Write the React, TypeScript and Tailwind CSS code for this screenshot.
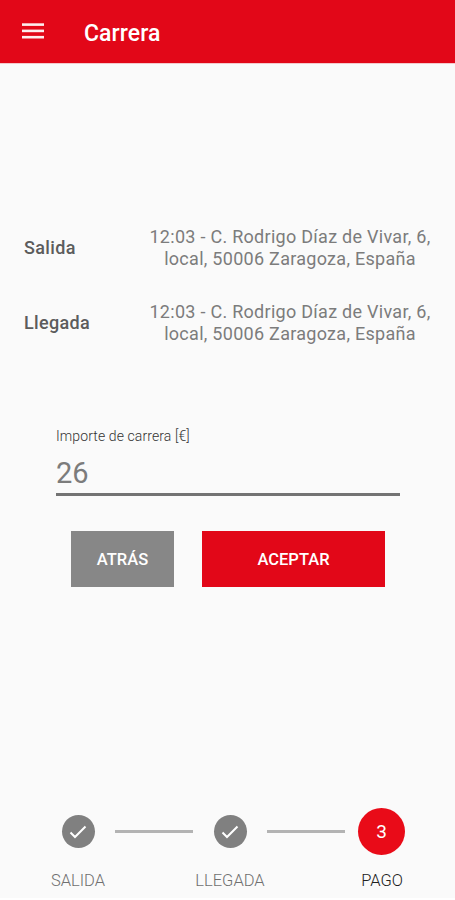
const trips = [
  { label: 'Salida', address: ['12:03 - C. Rodrigo Díaz de Vivar, 6,', 'local, 50006 Zaragoza, España'] },
  { label: 'Llegada', address: ['12:03 - C. Rodrigo Díaz de Vivar, 6,', 'local, 50006 Zaragoza, España'] }
];

const steps = [
  { label: 'SALIDA', done: true },
  { label: 'LLEGADA', done: true },
  { label: 'PAGO', done: false }
];

const Header = () => (
  <header className="flex h-16 shrink-0 items-center border-b border-[#f4c9cc] bg-[#e20718] pl-[22px] text-white">
    <button aria-label="Menu" className="mb-[2px]">
      <svg width="22" height="16" viewBox="0 0 22 16" fill="#fff" fillOpacity="0.93">
        <rect y="0.3" width="22" height="2.6" />
        <rect y="6.6" width="22" height="2.6" />
        <rect y="12.9" width="22" height="2.6" />
      </svg>
    </button>
    <h1 className="mt-[4px] ml-10 text-[23px] leading-7 font-medium tracking-[0.1px]">Carrera</h1>
  </header>
);

const TripInfo = () => (
  <section className="mt-[162px] flex flex-col gap-[31px] pl-6">
    {trips.map((trip) => (
      <div key={trip.label} className="flex h-11 items-center">
        <div className="w-[116px] pb-0.5 text-[18px] font-medium tracking-[0.35px] text-[#5c5c5c]">{trip.label}</div>
        <div className="w-[300px] text-center text-[18px] leading-[22px] tracking-[0.28px] whitespace-nowrap text-[#7c7c7c]">
          {trip.address.map((line) => (
            <p key={line}>{line}</p>
          ))}
        </div>
      </div>
    ))}
  </section>
);

const PaymentForm = () => (
  <section className="mt-[83px] flex flex-col pr-[55px] pl-14">
    <label className="text-[14px] leading-4 font-light tracking-[0.1px] text-[#333]">Importe de carrera [€]</label>
    <div className="mt-3 h-10 border-b-[3px] border-[#737373] text-[29px] leading-[34px] text-[#7c7c7c]">26</div>
    <div className="mt-[35px] flex gap-7 pl-[15px] text-[16.5px] font-medium text-white">
      <button className="h-14 w-[103px] bg-[#878787] pt-0.5">ATRÁS</button>
      <button className="h-14 w-[183px] bg-[#e20718] pt-0.5">ACEPTAR</button>
    </div>
  </section>
);

const Stepper = () => (
  <footer className="mt-auto flex h-[92px] shrink-0 border-b-2 border-white pl-0.5">
    {steps.map((step, index) => (
      <div key={step.label} className="relative flex w-[152px] shrink-0 flex-col items-center">
        <div className="flex h-[47px] items-center">
          {step.done ? (
            <div className="flex size-[33px] items-center justify-center rounded-full bg-[#808080]">
              <svg width="18" height="14" viewBox="0 0 18 14" fill="none" stroke="#fff" strokeWidth="2">
                <path d="M1.5 7.5 6 12 16.5 1.5" />
              </svg>
            </div>
          ) : (
            <div className="mr-px flex size-[47px] items-center justify-center rounded-full bg-[#e90b18] pt-px text-[19px] text-white">
              {index + 1}
            </div>
          )}
        </div>
        {index < steps.length - 1 && (
          <div className="absolute top-[22px] left-[113px] h-[3px] w-[78px] bg-[#b3b3b3]" />
        )}
        <div className={`mt-4 text-[16.5px] leading-5 font-light ${step.done ? 'text-[#707070]' : 'text-[#202020]'}`}>
          {step.label}
        </div>
      </div>
    ))}
  </footer>
);

const App = () => {
  return (
    <main className="flex h-[900px] w-[455px] flex-col overflow-hidden bg-[#fafafa] font-[Roboto,sans-serif]">
      <Header />
      <TripInfo />
      <PaymentForm />
      <Stepper />
    </main>
  );
};

export default App;
